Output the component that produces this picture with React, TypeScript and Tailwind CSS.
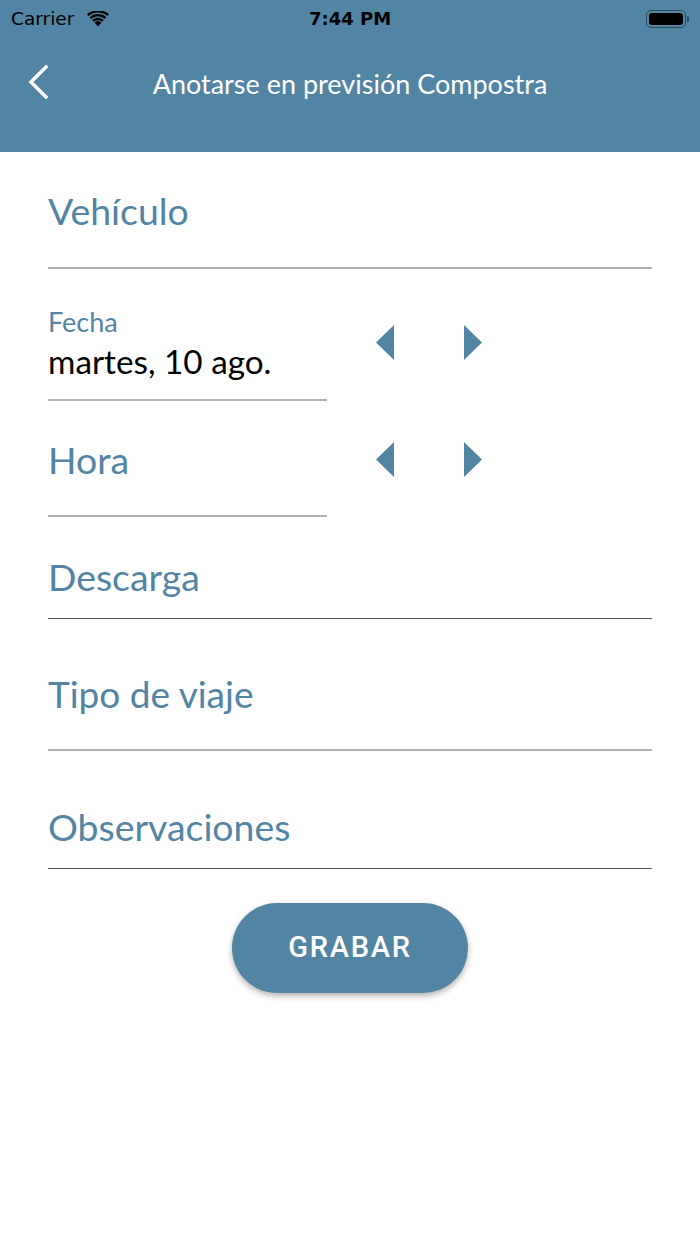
import React from "react";

const BLUE = "#5284a4";

const StatusBar: React.FC = () => (
  <div className="h-[38px] flex items-center justify-between px-[11px] text-black font-['DejaVu_Sans','Roboto',sans-serif]">
    <div className="flex items-center gap-[13px] w-[200px]">
      <span className="text-[18.5px] leading-none">Carrier</span>
      <svg width="22" height="16" viewBox="0 0 22 16">
        <path d="M11 15.5 L7.6 11.6 A5 5 0 0 1 14.4 11.6 Z" fill="#000" />
        <path d="M5.3 9.1 A8.4 8.4 0 0 1 16.7 9.1 L15.2 10.8 A6.2 6.2 0 0 0 6.8 10.8 Z" fill="#000" />
        <path d="M2.6 6.2 A12.4 12.4 0 0 1 19.4 6.2 L17.8 7.9 A10.1 10.1 0 0 0 4.2 7.9 Z" fill="#000" />
        <path d="M0 3.3 A16.4 16.4 0 0 1 22 3.3 L20.4 5 A14.1 14.1 0 0 0 1.6 5 Z" fill="#000" />
      </svg>
    </div>
    <span className="text-[18px] font-bold leading-none">7:44 PM</span>
    <div className="w-[200px] flex justify-end items-center">
      <div className="w-[40px] h-[18px] rounded-[5px] border-[1.5px] border-[#2a4a60] p-[2px]">
        <div className="w-full h-full bg-black rounded-[3px]" />
      </div>
      <div className="w-[2px] h-[6px] bg-[#2a4a60] rounded-r-sm ml-[1px]" />
    </div>
  </div>
);

const Arrows: React.FC = () => (
  <div className="flex items-center gap-[70px] ml-[49px]">
    <svg width="18" height="35" viewBox="0 0 18 35">
      <path d="M18 0 L18 35 L0 17.5 Z" fill={BLUE} />
    </svg>
    <svg width="18" height="35" viewBox="0 0 18 35">
      <path d="M0 0 L0 35 L18 17.5 Z" fill={BLUE} />
    </svg>
  </div>
);

const App: React.FC = () => {
  return (
    <div className="w-[700px] h-[1244px] bg-white font-['Lato','Noto_Sans',sans-serif]">
      <div className="h-[152px] bg-[#5284a4]">
        <StatusBar />
        <div className="relative h-[90px] flex items-center justify-center">
          <svg
            className="absolute left-[27px] top-[27px]"
            width="22"
            height="34"
            viewBox="0 0 22 34"
          >
            <path d="M19 2 L4 17 L19 32" stroke="#fff" strokeWidth="3.5" fill="none" strokeLinecap="square" />
          </svg>
          <span className="text-white text-[27px] leading-none">Anotarse en previsión Compostra</span>
        </div>
      </div>

      <div className="px-[48px]">
        <div className="h-[117px] border-b-2 border-[#b0b0b0] pt-[37px]">
          <span className="block text-[37.4px] leading-[44px] text-[#5284a4]">Vehículo</span>
        </div>

        <div className="flex">
          <div className="w-[279px] h-[132px] border-b-2 border-[#b0b0b0] pt-[38px]">
            <span className="block text-[27px] leading-[30px] text-[#5284a4]">Fecha</span>
            <span className="block mt-[4px] text-[33.3px] leading-[40px] text-black">martes, 10 ago.</span>
          </div>
          <div className="pt-[56px]">
            <Arrows />
          </div>
        </div>

        <div className="flex">
          <div className="w-[279px] h-[116px] border-b-2 border-[#b0b0b0] pt-[37px]">
            <span className="block text-[37.4px] leading-[44px] text-[#5284a4]">Hora</span>
          </div>
          <div className="pt-[41px]">
            <Arrows />
          </div>
        </div>

        <div className="h-[102px] border-b-[1.5px] border-[#555] pt-[38px]">
          <span className="block text-[37.4px] leading-[44px] text-[#5284a4]">Descarga</span>
        </div>

        <div className="h-[132px] border-b-2 border-[#b0b0b0] pt-[53px]">
          <span className="block text-[37px] leading-[44px] text-[#5284a4]">Tipo de viaje</span>
        </div>

        <div className="h-[118px] border-b-[1.5px] border-[#555] pt-[54px]">
          <span className="block text-[37.4px] leading-[44px] text-[#5284a4]">Observaciones</span>
        </div>

        <div className="flex justify-center pt-[34px]">
          <button className="w-[236px] h-[90px] rounded-full bg-[#5284a4] text-white text-[29px] font-medium tracking-[0.06em] font-['Roboto',sans-serif] shadow-[0_3px_6px_rgba(0,0,0,0.3)]">
            GRABAR
          </button>
        </div>
      </div>
    </div>
  );
};

export default App;
